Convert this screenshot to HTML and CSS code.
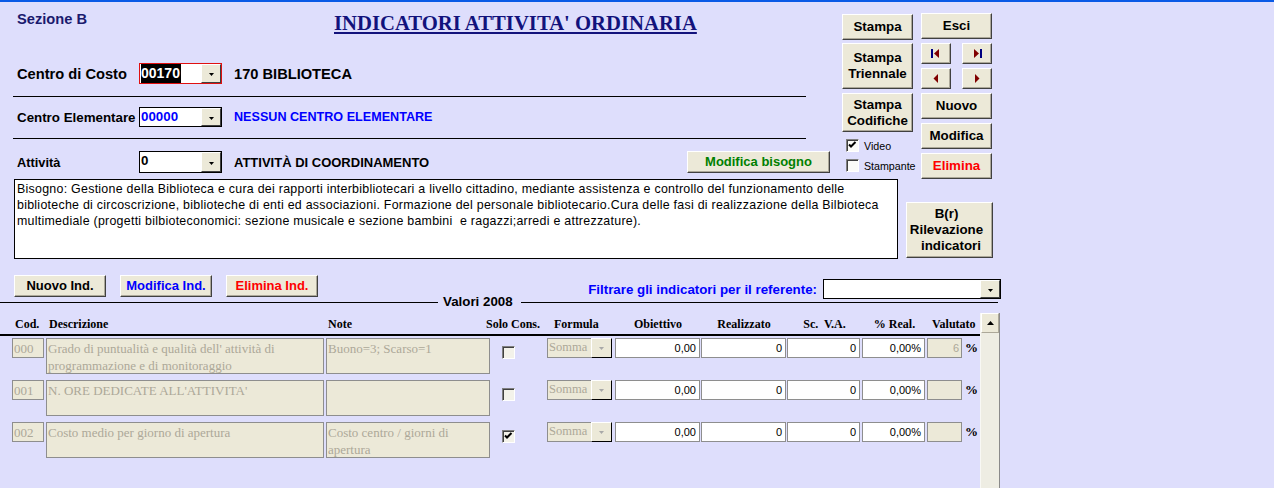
FILE: index.html
```html
<!DOCTYPE html>
<html lang="it">
<head>
<meta charset="utf-8">
<title>Indicatori attività ordinaria</title>
<link rel="stylesheet" href="styles.css">
</head>
<body>
<div class="screen">
  <div class="upper">
    <div class="form">
      <div class="head-row">
        <div class="sezione">Sezione B</div>
        <h1 class="title">INDICATORI ATTIVITA' ORDINARIA</h1>
      </div>
      <div class="field-row r1">
        <div class="label">Centro di Costo</div>
        <div class="combo focus"><div class="cval"><span class="sel">00170</span></div><div class="drop"><svg width="5" height="3" viewBox="0 0 5 3"><polygon points="0,0 5,0 2.5,3" fill="#000"/></svg></div></div>
        <div class="value big">170 BIBLIOTECA</div>
      </div>
      <div class="sep"></div>
      <div class="field-row r2">
        <div class="label">Centro Elementare</div>
        <div class="combo"><div class="cval blue">00000</div><div class="drop"><svg width="5" height="3" viewBox="0 0 5 3"><polygon points="0,0 5,0 2.5,3" fill="#000"/></svg></div></div>
        <div class="value blue small">NESSUN CENTRO ELEMENTARE</div>
      </div>
      <div class="sep"></div>
      <div class="field-row r3">
        <div class="label">Attività</div>
        <div class="combo"><div class="cval">0</div><div class="drop"><svg width="5" height="3" viewBox="0 0 5 3"><polygon points="0,0 5,0 2.5,3" fill="#000"/></svg></div></div>
        <div class="value">ATTIVITÀ DI COORDINAMENTO</div>
        <button class="btn bisogno-btn">Modifica bisogno</button>
      </div>
    </div>
    <div class="panel">
      <div class="pcol a">
        <button class="btn b-stampa">Stampa</button>
        <button class="btn b-trien">Stampa<br>Triennale</button>
        <button class="btn b-codif">Stampa<br>Codifiche</button>
        <div class="chk-row first"><span class="chk white"><svg width="11" height="11" viewBox="0 0 11 11"><path d="M2 4.5 L4 6.5 L8.5 2" fill="none" stroke="#000" stroke-width="2"/></svg></span><span>Video</span></div>
        <div class="chk-row"><span class="chk white"></span><span>Stampante</span></div>
      </div>
      <div class="pcol b">
        <button class="btn b-esci">Esci</button>
        <div class="nav-row">
          <button class="btn nav"><svg width="10" height="9" viewBox="0 0 10 9"><rect x="0" y="0" width="2" height="9" fill="#000080"/><polygon points="8,0 3,4.5 8,9" fill="#800000"/></svg></button>
          <button class="btn nav"><svg width="10" height="9" viewBox="0 0 10 9"><polygon points="2,0 7,4.5 2,9" fill="#800000"/><rect x="8" y="0" width="2" height="9" fill="#000080"/></svg></button>
        </div>
        <div class="nav-row">
          <button class="btn nav"><svg width="6" height="9" viewBox="0 0 6 9"><polygon points="5,0 0.5,4.5 5,9" fill="#800000"/></svg></button>
          <button class="btn nav"><svg width="6" height="9" viewBox="0 0 6 9"><polygon points="1,0 5.5,4.5 1,9" fill="#800000"/></svg></button>
        </div>
        <button class="btn b-std">Nuovo</button>
        <button class="btn b-std">Modifica</button>
        <button class="btn b-std red">Elimina</button>
      </div>
    </div>
  </div>

  <div class="bisogno-row">
    <div class="memo">Bisogno: Gestione della Biblioteca e cura dei rapporti interbibliotecari a livello cittadino, mediante assistenza e controllo del funzionamento delle
biblioteche di circoscrizione, biblioteche di enti ed associazioni. Formazione del personale bibliotecario.Cura delle fasi di realizzazione della Bilbioteca
multimediale (progetti bilbioteconomici: sezione musicale e sezione bambini  e ragazzi;arredi e attrezzature).</div>
    <button class="btn rilev"><span>B(r)</span><span>Rilevazione</span><span class="ind">indicatori</span></button>
  </div>

  <div class="ind-toolbar">
    <button class="btn tb">Nuovo Ind.</button>
    <button class="btn tb blue">Modifica Ind.</button>
    <button class="btn tb red">Elimina Ind.</button>
    <div class="filter">
      <span>Filtrare gli indicatori per il referente:</span>
      <div class="combo fcb"><div class="cval"></div><div class="drop"><svg width="5" height="3" viewBox="0 0 5 3"><polygon points="0,0 5,0 2.5,3" fill="#000"/></svg></div></div>
    </div>
  </div>

  <div class="valori">
    <div class="vl l1"></div>
    <span class="vtext">Valori 2008</span>
    <div class="vl l2"></div>
  </div>

  <div class="table">
    <div class="grid-area">
      <div class="thead">
        <span class="h-cod">Cod.</span>
        <span class="h-desc">Descrizione</span>
        <span class="h-note">Note</span>
        <span class="h-solo">Solo Cons.</span>
        <span class="h-form">Formula</span>
        <span class="h-ob">Obiettivo</span>
        <span class="h-real">Realizzato</span>
        <span class="h-sc">Sc.&nbsp; V.A.</span>
        <span class="h-pr">% Real.</span>
        <span class="h-val">Valutato</span>
      </div>
      <div class="rows">
        <div class="trow">
          <div class="fd f-cod">000</div>
          <div class="fd f-desc">Grado di puntualità e qualità dell' attività di programmazione e di monitoraggio</div>
          <div class="fd f-note">Buono=3; Scarso=1</div>
          <div class="cell-chk"><span class="chk"></span></div>
          <div class="fcombo"><span class="ftext">Somma</span><span class="fdrop"><svg width="5" height="3" viewBox="0 0 5 3"><polygon points="0,0 5,0 2.5,3" fill="#a8a8a8"/></svg></span></div>
          <div class="fn w85">0,00</div>
          <div class="fn w85">0</div>
          <div class="fn w73">0</div>
          <div class="fn w63">0,00%</div>
          <div class="fd f-val">6</div>
          <div class="pct">%</div>
        </div>
        <div class="trow">
          <div class="fd f-cod">001</div>
          <div class="fd f-desc">N. ORE DEDICATE ALL'ATTIVITA'</div>
          <div class="fd f-note"></div>
          <div class="cell-chk"><span class="chk"></span></div>
          <div class="fcombo"><span class="ftext">Somma</span><span class="fdrop"><svg width="5" height="3" viewBox="0 0 5 3"><polygon points="0,0 5,0 2.5,3" fill="#a8a8a8"/></svg></span></div>
          <div class="fn w85">0,00</div>
          <div class="fn w85">0</div>
          <div class="fn w73">0</div>
          <div class="fn w63">0,00%</div>
          <div class="fd f-val"></div>
          <div class="pct">%</div>
        </div>
        <div class="trow">
          <div class="fd f-cod">002</div>
          <div class="fd f-desc">Costo medio per giorno di apertura</div>
          <div class="fd f-note">Costo centro / giorni di apertura</div>
          <div class="cell-chk"><span class="chk"><svg width="11" height="11" viewBox="0 0 11 11"><path d="M2 4.5 L4 6.5 L8.5 2" fill="none" stroke="#000" stroke-width="2"/></svg></span></div>
          <div class="fcombo"><span class="ftext">Somma</span><span class="fdrop"><svg width="5" height="3" viewBox="0 0 5 3"><polygon points="0,0 5,0 2.5,3" fill="#a8a8a8"/></svg></span></div>
          <div class="fn w85">0,00</div>
          <div class="fn w85">0</div>
          <div class="fn w73">0</div>
          <div class="fn w63">0,00%</div>
          <div class="fd f-val"></div>
          <div class="pct">%</div>
        </div>
      </div>
    </div>
    <div class="vscroll">
      <div class="sb-up"><svg width="7" height="4" viewBox="0 0 7 4"><polygon points="0,4 7,4 3.5,0" fill="#000"/></svg></div>
    </div>
  </div>
</div>
</body>
</html>
```

FILE: styles.css
```css
* { box-sizing: border-box; }
html, body { margin: 0; padding: 0; }
body {
  width: 1274px;
  height: 488px;
  overflow: hidden;
  background: #dedefc;
  border-top: 2px solid #0a5ae6;
  font-family: "Liberation Sans", Arial, sans-serif;
  color: #000;
}
.screen { width: 1274px; }

/* ---------- upper form ---------- */
.upper { display: flex; height: 177px; }
.form { width: 842px; }
.head-row { display: flex; align-items: flex-start; margin-top: 9px; height: 24px; }
.sezione {
  width: 334px;
  padding-left: 17px;
  font-weight: bold;
  font-size: 14.67px;
  line-height: 17px;
  color: #1a1a6e;
}
.title {
  margin: 0;
  font-family: "Liberation Serif", "Times New Roman", serif;
  font-weight: bold;
  font-size: 20.7px;
  line-height: 24px;
  color: #12127c;
  text-decoration: underline;
  white-space: nowrap;
}
.field-row { display: flex; align-items: center; padding-left: 17px; }
.r1 { margin-top: 28px; height: 21px; }
.r2 { margin-top: 10px; height: 20px; }
.r3 { margin-top: 12px; height: 22px; padding-right: 12px; }
.label { width: 122px; font-weight: bold; font-size: 13.33px; white-space: nowrap; }
.r1 .label { font-size: 14.67px; }
.r3 .label { font-size: 12.8px; }
.sep { height: 1px; background: #000; margin-left: 13px; width: 793px; }
.r1 + .sep { margin-top: 12px; }
.r2 + .sep { margin-top: 11px; }

.combo {
  width: 83px;
  height: 100%;
  display: flex;
  background: #fff;
  border: 1px solid #000;
}
.combo.focus { border-color: #e01010; }
.cval {
  flex: 1;
  font-weight: bold;
  font-size: 13.33px;
  line-height: 18px;
  padding-left: 1px;
  white-space: nowrap;
  overflow: hidden;
}
.sel { display: inline-block; background: #000; color: #fff; font-size: 14px; line-height: 19px; padding-right: 1px; }
.drop {
  width: 20px;
  height: 100%;
  background: #ece9d8;
  border: 1px solid;
  border-color: #fff #404040 #404040 #fff;
  display: flex;
  align-items: center;
  justify-content: center;
  padding-top: 2px;
}
.drop svg { display: block; }
.value { margin-left: 12px; font-weight: bold; font-size: 13px; white-space: nowrap; }
.value.big { font-size: 14.65px; }
.value.small { font-size: 12.6px; }
.blue { color: #0000ff; }
.red { color: #ff0000; }

/* ---------- buttons ---------- */
.btn {
  background: #ece9d8;
  border: 1px solid;
  border-color: #fff #404040 #404040 #fff;
  box-shadow: inset -1px -1px 0 #aca899;
  font-family: "Liberation Sans", Arial, sans-serif;
  font-weight: bold;
  font-size: 13.33px;
  line-height: 16px;
  color: #000;
  padding: 0;
  margin: 0;
  display: flex;
  align-items: center;
  justify-content: center;
  text-align: center;
}
.btn.red { color: #ff0000; }
.btn.blue { color: #0000ff; }
.bisogno-btn { margin-left: auto; width: 143px; height: 22px; font-size: 13px; }
.btn.bisogno-btn { color: #008000; }

.panel { display: flex; gap: 8px; }
.pcol { width: 71px; display: flex; flex-direction: column; }
.pcol.a { margin-top: 12px; }
.pcol.b { margin-top: 11px; }
.b-stampa { height: 26px; }
.b-trien { height: 46px; margin-top: 3px; }
.b-codif { height: 39px; margin-top: 4px; }
.b-esci { height: 26px; }
.nav-row { display: flex; justify-content: space-between; margin-top: 4px; }
.nav { width: 30px; height: 21px; }
.nav svg { display: block; }
.b-std { height: 26px; margin-top: 4px; }

.chk-row {
  display: flex;
  align-items: center;
  margin-left: 4px;
  margin-top: 7px;
  height: 13px;
  font-size: 10.67px;
  white-space: nowrap;
}
.chk-row .chk { margin-right: 5px; }
.chk {
  display: inline-block;
  width: 13px;
  height: 13px;
  border: 1px solid;
  border-color: #808080 #fff #fff #808080;
  box-shadow: inset 1px 1px 0 #404040;
  background: #f3f2ea;
  flex: none;
}
.chk.white { background: #fbfbf8; }
.chk svg { display: block; }

/* ---------- bisogno ---------- */
.bisogno-row { display: flex; align-items: flex-start; }
.memo {
  margin-left: 14px;
  width: 884px;
  height: 80px;
  background: #fff;
  border: 1px solid #000;
  padding: 1px 2px;
  font-size: 12.4px;
  letter-spacing: 0.27px;
  line-height: 16px;
  white-space: pre;
  overflow: hidden;
}
.rilev {
  margin-left: 8px;
  margin-top: 23px;
  width: 87px;
  height: 56px;
  flex-direction: column;
  padding-right: 6px;
}
.rilev .ind { padding-left: 9px; }

/* ---------- toolbar ---------- */
.ind-toolbar {
  display: flex;
  align-items: flex-start;
  margin-top: 16px;
  height: 22px;
  width: 1001px;
  padding-left: 14px;
  gap: 14px;
}
.tb { width: 92px; height: 22px; font-size: 13px; }
.filter {
  margin-left: auto;
  display: flex;
  align-items: center;
  margin-top: 4px;
  color: #0000ff;
  font-weight: bold;
  font-size: 13.33px;
  white-space: nowrap;
}
.fcb { width: 178px; height: 20px; margin-left: 6px; }

/* ---------- valori separator ---------- */
.valori { display: flex; align-items: center; height: 10px; width: 998px; }
.vl { height: 1px; background: #000; }
.l1 { width: 438px; }
.l2 { flex: 1; }
.vtext { margin: 0 8px 0 5px; font-weight: bold; font-size: 13.33px; line-height: 10px; white-space: nowrap; }

/* ---------- table ---------- */
.table { display: flex; margin-top: 6px; }
.grid-area { width: 980px; }
.thead {
  height: 23px;
  border-bottom: 2px solid #000;
  display: flex;
  align-items: center;
  padding-left: 15px;
  padding-top: 1px;
  font-family: "Liberation Serif", "Times New Roman", serif;
  font-weight: bold;
  font-size: 12px;
  white-space: nowrap;
}
.thead span { display: block; }
.h-cod { width: 34px; }
.h-desc { width: 279px; }
.h-note { width: 158px; }
.h-solo { width: 68px; }
.h-form { width: 61px; }
.h-ob, .h-real { width: 86px; text-align: center; }
.h-sc { width: 75px; text-align: center; }
.h-pr { width: 65px; text-align: center; }
.h-val { margin-left: 5px; }

.rows { padding-top: 2px; }
.trow {
  height: 42px;
  display: grid;
  grid-template-columns: 34px 280px 166px 55px 68px 86px 86px 75px 65px 38px auto;
  align-items: start;
  padding-left: 12px;
}
.fd {
  background: #ece9d8;
  border: 1px solid #8e8e8e;
  color: #aca899;
  font-family: "Liberation Serif", "Times New Roman", serif;
  font-size: 13px;
  line-height: 17px;
  padding: 1px 1px 0;
  overflow: hidden;
}
.f-cod { width: 32px; height: 20px; }
.f-desc { width: 278px; height: 36px; }
.f-note { width: 164px; height: 36px; }
.f-val { width: 35px; height: 20px; text-align: right; padding-right: 2px; font-family: "Liberation Sans", Arial, sans-serif; font-size: 11px; line-height: 17px; }
.cell-chk { padding-left: 10px; padding-top: 7px; }

.fcombo {
  width: 65px;
  height: 20px;
  display: flex;
  background: #ece9d8;
  border: 1px solid #8e8e8e;
  border-right: none;
}
.ftext {
  flex: 1;
  color: #aca899;
  font-family: "Liberation Serif", "Times New Roman", serif;
  font-size: 12.5px;
  line-height: 17px;
  padding-left: 1px;
  overflow: hidden;
}
.fdrop {
  width: 21px;
  height: 20px;
  margin-top: -1px;
  background: #ece9d8;
  border: 1px solid;
  border-color: #fff #000 #000 #fff;
  display: flex;
  align-items: center;
  justify-content: center;
  padding-top: 1px;
}
.fdrop svg { display: block; }

.fn {
  height: 20px;
  background: #fff;
  border: 1px solid #8e8e8e;
  text-align: right;
  font-size: 11px;
  line-height: 18px;
  padding-right: 3px;
}
.w85 { width: 85px; }
.w73 { width: 73px; }
.w63 { width: 63px; }
.pct {
  font-family: "Liberation Serif", "Times New Roman", serif;
  font-weight: bold;
  font-size: 13px;
  line-height: 20px;
}

.vscroll {
  width: 20px;
  height: 180px;
  background: #eeede3;
  border-left: 1px solid #f8f8f4;
  border-right: 1px solid #8a8a8a;
}
.sb-up {
  height: 20px;
  border: 1px solid;
  border-color: #fff #aca899 #aca899 #fff;
  background: #ece9d8;
  display: flex;
  align-items: center;
  justify-content: center;
}
.sb-up svg { display: block; }
```
